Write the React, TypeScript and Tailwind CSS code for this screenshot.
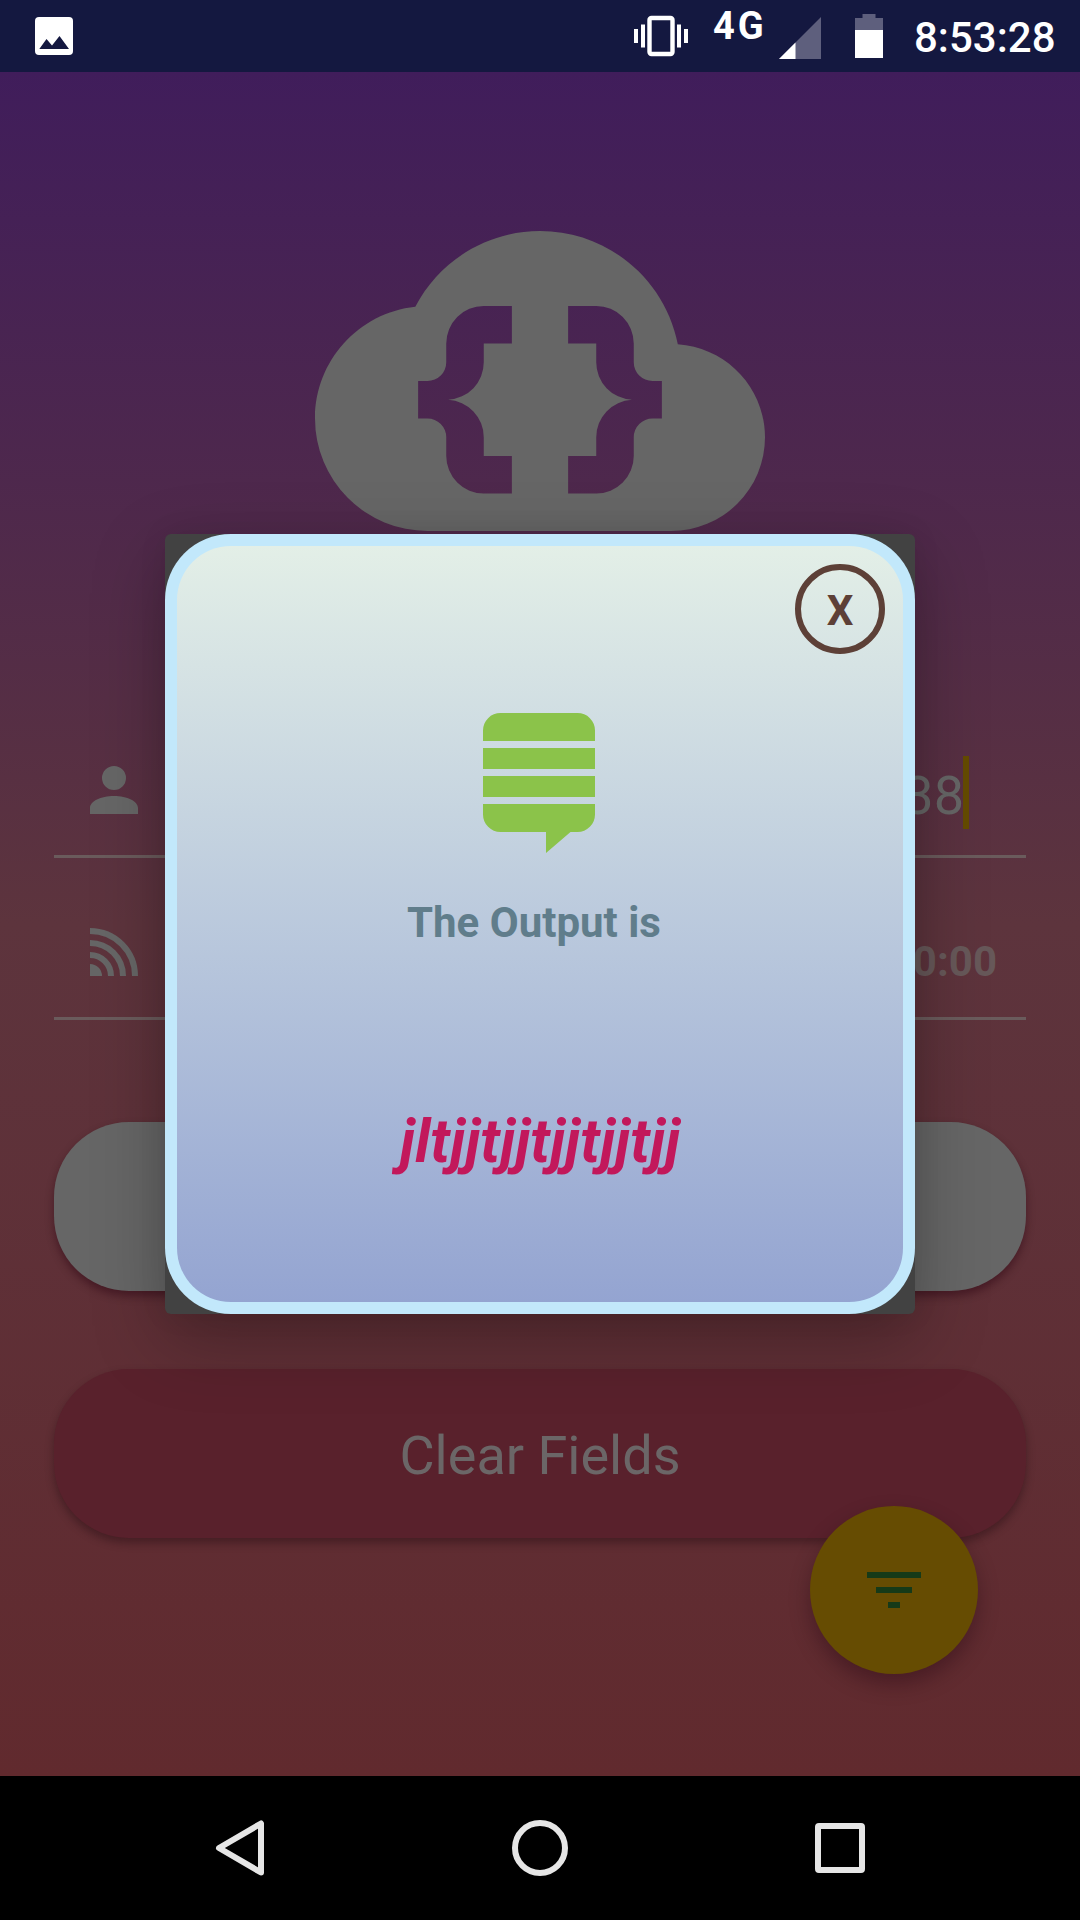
import React from "react";

function StatusBar() {
  return (
    <header className="flex h-[72px] shrink-0 items-start bg-[#141840] text-white">
      <svg className="ml-[35px] mt-[17px] size-[38px]" viewBox="0 0 38 38">
        <rect width="38" height="38" rx="4" fill="#fff" />
        <path d="M4.3 32 L11.5 22 L17 28.5 L24.5 19 L34 32Z" fill="#141840" />
      </svg>
      <svg className="ml-[561px] mt-[15px] h-[42px] w-[54px]" viewBox="0 0 54 42" fill="#fff">
        <rect x="0" y="14" width="4" height="14" />
        <rect x="7" y="9.5" width="4" height="23" />
        <rect x="15.5" y="3" width="23" height="36" rx="2" fill="none" stroke="#fff" strokeWidth="4.4" />
        <rect x="43" y="9.5" width="4" height="23" />
        <rect x="50" y="14" width="4" height="14" />
      </svg>
      <span className="ml-[25px] mt-[5px] w-[66px] text-[38px] font-bold leading-[42px] tracking-[3px]">4G</span>
      <svg className="mt-[17px] h-[42px] w-[42px]" viewBox="0 0 42 42">
        <path d="M0 42 L42 0 V42Z" fill="#5e5f7d" />
        <path d="M0 42 L16.5 25.5 V42Z" fill="#fff" />
      </svg>
      <svg className="ml-[34px] mt-[14px] h-[44px] w-[28px]" viewBox="0 0 28 44">
        <path d="M7.5 0H20.5V4H28V17H0V4H7.5Z" fill="#5e5f7d" />
        <rect y="16" width="28" height="28" fill="#fff" />
      </svg>
      <span className="ml-[31px] mt-[13px] whitespace-nowrap text-[42px] font-medium leading-[50px]">8:53:28</span>
    </header>
  );
}

function CloudBraces() {
  return (
    <svg className="h-[300px] w-[450px]" viewBox="0 4 24 16" fill="#666666">
      <path
        fillRule="evenodd"
        d="M19.35 10.04C18.67 6.59 15.64 4 12 4C9.11 4 6.6 5.64 5.35 8.04C2.34 8.36 0 10.91 0 14A6 6 0 0 0 6 20H19A5 5 0 0 0 24 15C24 12.36 21.95 10.22 19.35 10.04ZM10.5 8H9A2 2 0 0 0 7 10V11A1 1 0 0 1 6 12H5.5V14H6A1 1 0 0 1 7 15V16A2 2 0 0 0 9 18H10.5V16H9V15A2 2 0 0 0 7.1 13A2 2 0 0 0 9 11V10H10.5ZM13.5 8H15A2 2 0 0 1 17 10V11A1 1 0 0 0 18 12H18.5V14H18A1 1 0 0 0 17 15V16A2 2 0 0 1 15 18H13.5V16H15V15A2 2 0 0 1 16.9 13A2 2 0 0 1 15 11V10H13.5Z"
      />
    </svg>
  );
}

function Fields() {
  return (
    <div className="mx-[54px] mt-[165px]">
      <div className="flex h-[162px] items-start border-b-[3px] border-[#6a5b5c] pl-[36px]">
        <svg className="mt-[70px] size-[48px]" viewBox="4 4 16 16" fill="#666666">
          <path d="M12 4A4 4 0 0 1 16 8A4 4 0 0 1 12 12A4 4 0 0 1 8 8A4 4 0 0 1 12 4M12 14C16.42 14 20 15.79 20 18V20H4V18C4 15.79 7.58 14 12 14Z" />
        </svg>
        <span className="-mr-px ml-auto mt-[68px] text-[54px] leading-[64px] text-[#666666]">38</span>
        <span className="mr-[57px] mt-[60px] h-[73px] w-[6px] bg-[#644b00]" />
      </div>
      <div className="flex h-[162px] items-start border-b-[3px] border-[#6a5b5c] pl-[36px]">
        <svg className="mt-[70px] size-[48px]" viewBox="0 0 48 48" fill="none" stroke="#666666" strokeWidth="6">
          <path d="M0 36A12 12 0 0 1 12 48H0Z" fill="#666666" stroke="none" />
          <path d="M0 27A21 21 0 0 1 21 48M0 15A33 33 0 0 1 33 48M0 3A45 45 0 0 1 45 48" />
        </svg>
        <span className="ml-auto mr-[29px] mt-[79px] text-[42px] font-bold leading-[50px] text-[#675859]">00:00</span>
      </div>
    </div>
  );
}

function OutputDialog() {
  return (
    <section className="absolute left-[165px] top-[534px] h-[780px] w-[750px] rounded-[6px] bg-[#424242] shadow-[0_24px_72px_rgba(0,0,0,0.27),0_0_30px_rgba(0,0,0,0.07)]">
      <div className="h-full rounded-[66px] bg-[#c2e8fb] p-[12px]">
        <div className="flex h-full flex-col items-center rounded-[54px] bg-linear-to-b from-[#e3efe7] to-[#94a4d1]">
          <button className="mr-[18px] mt-[18px] flex size-[90px] items-center justify-center self-end rounded-full border-[6px] border-[#5d4037] pt-[3px] text-[42px] font-bold leading-none text-[#5d4037]">
            X
          </button>
          <svg className="mr-[2px] mt-[59px] h-[140px] w-[112px]" viewBox="4 2 16 20" fill="#8bc34a">
            <path d="M4 6V4.5A2.5 2.5 0 0 1 6.5 2H17.5A2.5 2.5 0 0 1 20 4.5V6ZM4 7H20V10H4ZM4 11H20V14H4ZM4 15H20V16.5A2.5 2.5 0 0 1 17.5 19H16.5L13 22V19H6.5A2.5 2.5 0 0 1 4 16.5Z" />
          </svg>
          <h2 className="mr-[12px] mt-[45px] text-[42px] font-bold leading-[50px] text-[#607d8b]">The Output is</h2>
          <p className="mt-[158px] text-[60px] font-bold italic leading-[72px] text-[#c2185b]">jltjjtjjtjjtjjtjj</p>
        </div>
      </div>
    </section>
  );
}

function NavBar() {
  return (
    <nav className="flex h-[144px] shrink-0 items-center bg-black pl-[213px]">
      <svg className="size-[56px]" viewBox="0 0 56 56" fill="none" stroke="#e6e6e6" strokeWidth="6" strokeLinejoin="round">
        <path d="M48 3.5V52.5L6 28Z" />
      </svg>
      <span className="ml-[243px] size-[56px] rounded-full border-[6px] border-[#e6e6e6]" />
      <span className="ml-[247px] size-[50px] rounded-[4px] border-[6px] border-[#e6e6e6]" />
    </nav>
  );
}

export default function App() {
  return (
    <div className="relative flex h-[1920px] w-[1080px] flex-col overflow-hidden font-[Roboto,sans-serif]">
      <StatusBar />
      <main className="flex h-[1704px] flex-col bg-[linear-gradient(to_bottom,#401d5b_0%,#5d343d_50%,#612a2e_100%)]">
        <div className="mt-[159px] flex justify-center">
          <CloudBraces />
        </div>
        <Fields />
        <button className="mx-[54px] mt-[102px] h-[169px] rounded-[75px] bg-[#666666] shadow-[0_5px_8px_rgba(40,0,15,0.45)]" />
        <button className="mx-[54px] mt-[78px] h-[169px] rounded-[75px] bg-[#59212c] pt-[5px] text-[54px] leading-[64px] text-[#6b6667] shadow-[0_5px_8px_rgba(30,10,15,0.4)]">
          Clear Fields
        </button>
      </main>
      <button className="absolute left-[810px] top-[1506px] flex size-[168px] flex-col items-center justify-center gap-[9px] rounded-full bg-[#664c02] shadow-[0_10px_20px_rgba(30,0,15,0.35)]">
        <span className="h-[6px] w-[54px] bg-[#163a18]" />
        <span className="h-[6px] w-[36px] bg-[#163a18]" />
        <span className="h-[6px] w-[12px] bg-[#163a18]" />
      </button>
      <OutputDialog />
      <NavBar />
    </div>
  );
}
